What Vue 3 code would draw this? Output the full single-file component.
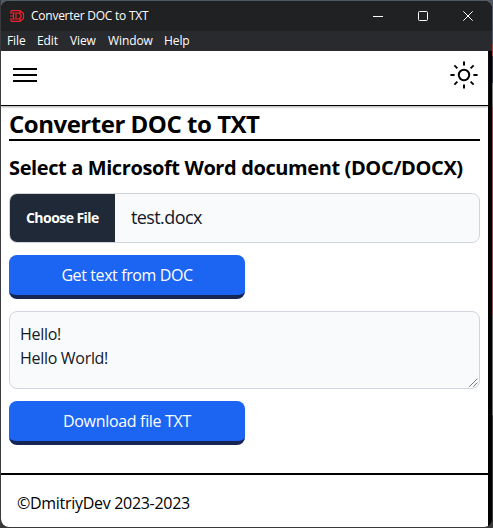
<script setup>
import { ref } from 'vue'

const menus = ['File', 'Edit', 'View', 'Window', 'Help']
const text = ref('Hello!\nHello World!')
const rays = [0, 45, 90, 135, 180, 225, 270, 315]
</script>

<template>
  <div class="desktop">
    <div class="window">
      <div class="titlebar">
        <svg class="logo" width="15" height="12" viewBox="0 0 15 12" fill="none" stroke="#f0202c" stroke-width="1.2">
          <path d="M1 .7H10L13.500 3.500V8.500L10 11.300H1M1 .7V3H5M1 11.300V9H5M3.500 3V9M0 6H3.500M6 3H9L11 5V7L9 9H6ZM10 .7V3.500M10 11.300V8.500" />
        </svg>
        <span class="title">Converter DOC to TXT</span>
        <div class="controls">
          <svg width="10" height="10" viewBox="0 0 10 10"><path d="M0 5.500H10" /></svg>
          <svg width="10" height="10" viewBox="0 0 10 10"><rect x=".5" y=".5" width="9" height="9" rx="1" /></svg>
          <svg width="10" height="10" viewBox="0 0 10 10"><path d="M.3.3L9.700 9.700M9.700.3L.3 9.700" /></svg>
        </div>
      </div>
      <nav class="menubar">
        <span v-for="m in menus" :key="m" :class="['menu', 'menu-' + m.toLowerCase()]">{{ m }}</span>
      </nav>
      <div class="body">
        <div class="page">
          <header class="header">
            <div class="burger"><i></i><i></i><i></i></div>
            <svg class="sun" width="28" height="28" viewBox="0 0 28 28" fill="none" stroke="#000" stroke-width="2">
              <circle cx="14" cy="14" r="5.200" />
              <path v-for="r in rays" :key="r" d="M14 .4V4.600" :transform="`rotate(${r} 14 14)`" />
            </svg>
          </header>
          <main class="main">
            <h1>Converter DOC to TXT</h1>
            <h2>Select a Microsoft Word document (DOC/DOCX)</h2>
            <div class="file">
              <span class="choose">Choose File</span>
              <span class="filename">test.docx</span>
            </div>
            <button class="btn get">Get text from DOC</button>
            <div class="area">
              <div class="text">{{ text }}</div>
              <svg class="grip" width="9" height="9" viewBox="0 0 9 9" stroke="#333" stroke-width="1" stroke-dasharray="1.100 .3">
                <path d="M.5 8.500L8.500 .5M4.500 8.500L8.500 4.500" />
              </svg>
            </div>
            <button class="btn download">Download file TXT</button>
          </main>
          <footer class="footer"><span>©DmitriyDev 2023-2023</span></footer>
        </div>
      </div>
    </div>
  </div>
</template>

<style>
body { margin: 0; overflow: hidden; }
</style>

<style scoped>
* { box-sizing: border-box; }
.desktop {
  width: 493px;
  height: 528px;
  padding: 1px;
  background: linear-gradient(90deg, #3b3b3f 0 1px, transparent 1px),
    linear-gradient(#505a65 0 44px, #a44 44px 56px, #333a45 56px 83px, #777 83px 107px, #914b50 107px 315px, #6b6868 315px 415px, #38383b 415px);
  font-family: "Open Sans", "Noto Sans", sans-serif;
  color: #000;
}
.window {
  width: 491px;
  height: 526px;
  display: flex;
  flex-direction: column;
  border-radius: 8px;
  overflow: hidden;
  background: #000;
}
.titlebar {
  height: 30px;
  flex: none;
  display: flex;
  align-items: center;
  padding: 0 19px 1px 9px;
  background: #202122;
  color: #fff;
}
.title { margin-left: 6px; padding-top: 1px; font-size: 12px; line-height: 16px; white-space: nowrap; letter-spacing: -0.25px; }
.controls { margin-left: auto; display: flex; gap: 35px; fill: none; stroke: #fff; stroke-width: 1; }
.menubar {
  height: 20px;
  flex: none;
  display: flex;
  background: #292a2d;
  color: #fff;
  font-size: 12px;
  line-height: 20px;
  padding-left: 6px;
}
.menu { white-space: nowrap; letter-spacing: -0.1px; }
.menu-file { width: 30px; }
.menu-edit { width: 33px; }
.menu-view { width: 38px; }
.menu-window { width: 56px; }
.body { flex: 1; background: #000; }
.page {
  width: 487px;
  height: 476px;
  display: flex;
  flex-direction: column;
  background: #fff;
}
.header {
  height: 55px;
  flex: none;
  display: flex;
  align-items: flex-start;
  justify-content: space-between;
  padding: 10px 10px 0 12px;
  border-bottom: 1px solid #000;
  box-shadow: 0 1px 2px #5558;
}
.burger { width: 24px; display: flex; flex-direction: column; gap: 4px; padding-top: 7px; }
.burger i { height: 2px; background: #000; }
.main { flex: 1; display: flex; flex-direction: column; align-items: flex-start; padding: 3px 8px 0; }
h1, h2 { margin: 0; white-space: nowrap; width: 471px; font-weight: 700; }
h1 { height: 32px; line-height: 29px; font-size: 24px; border-bottom: 2px solid #000; letter-spacing: -0.48px; }
h2 { height: 52px; line-height: 53px; font-size: 20px; letter-spacing: -0.39px; }
.file {
  width: 471px;
  height: 50px;
  flex: none;
  display: flex;
  align-items: center;
  border: 1px solid #d1d5db;
  border-radius: 8px;
  background: #f9fafb;
  overflow: hidden;
}
.choose {
  width: 105px;
  height: 48px;
  line-height: 48px;
  padding-left: 16px;
  background: #1f2937;
  color: #fff;
  font-size: 14px;
  font-weight: 700;
  white-space: nowrap;
  letter-spacing: -0.55px;
}
.filename { margin-left: 16px; font-size: 18px; line-height: 28px; padding-bottom: 2px; color: #111827; letter-spacing: -0.6px; }
.btn {
  width: 236px;
  height: 44px;
  flex: none;
  margin: 12px 0;
  padding: 0;
  border: 0;
  border-bottom: 4px solid #172554;
  border-radius: 8px;
  background: #1c64f2;
  color: #fff;
  font-family: inherit;
  font-size: 16px;
  line-height: 40px;
}
.get { letter-spacing: -0.4px; }
.download { letter-spacing: -0.32px; }
.area {
  position: relative;
  width: 471px;
  height: 78px;
  flex: none;
  padding: 10px;
  border: 1px solid #d1d5db;
  border-radius: 8px;
  background: #f9fafb;
}
.text { white-space: pre; font-size: 16px; line-height: 24px; color: #111827; letter-spacing: -0.3px; }
.grip { position: absolute; right: 1px; bottom: 1px; }
.footer {
  height: 54px;
  flex: none;
  padding: 16px 16px 0;
  border-top: 2px solid #000;
  font-size: 16px;
  line-height: 24px;
  letter-spacing: -0.3px;
}
</style>
